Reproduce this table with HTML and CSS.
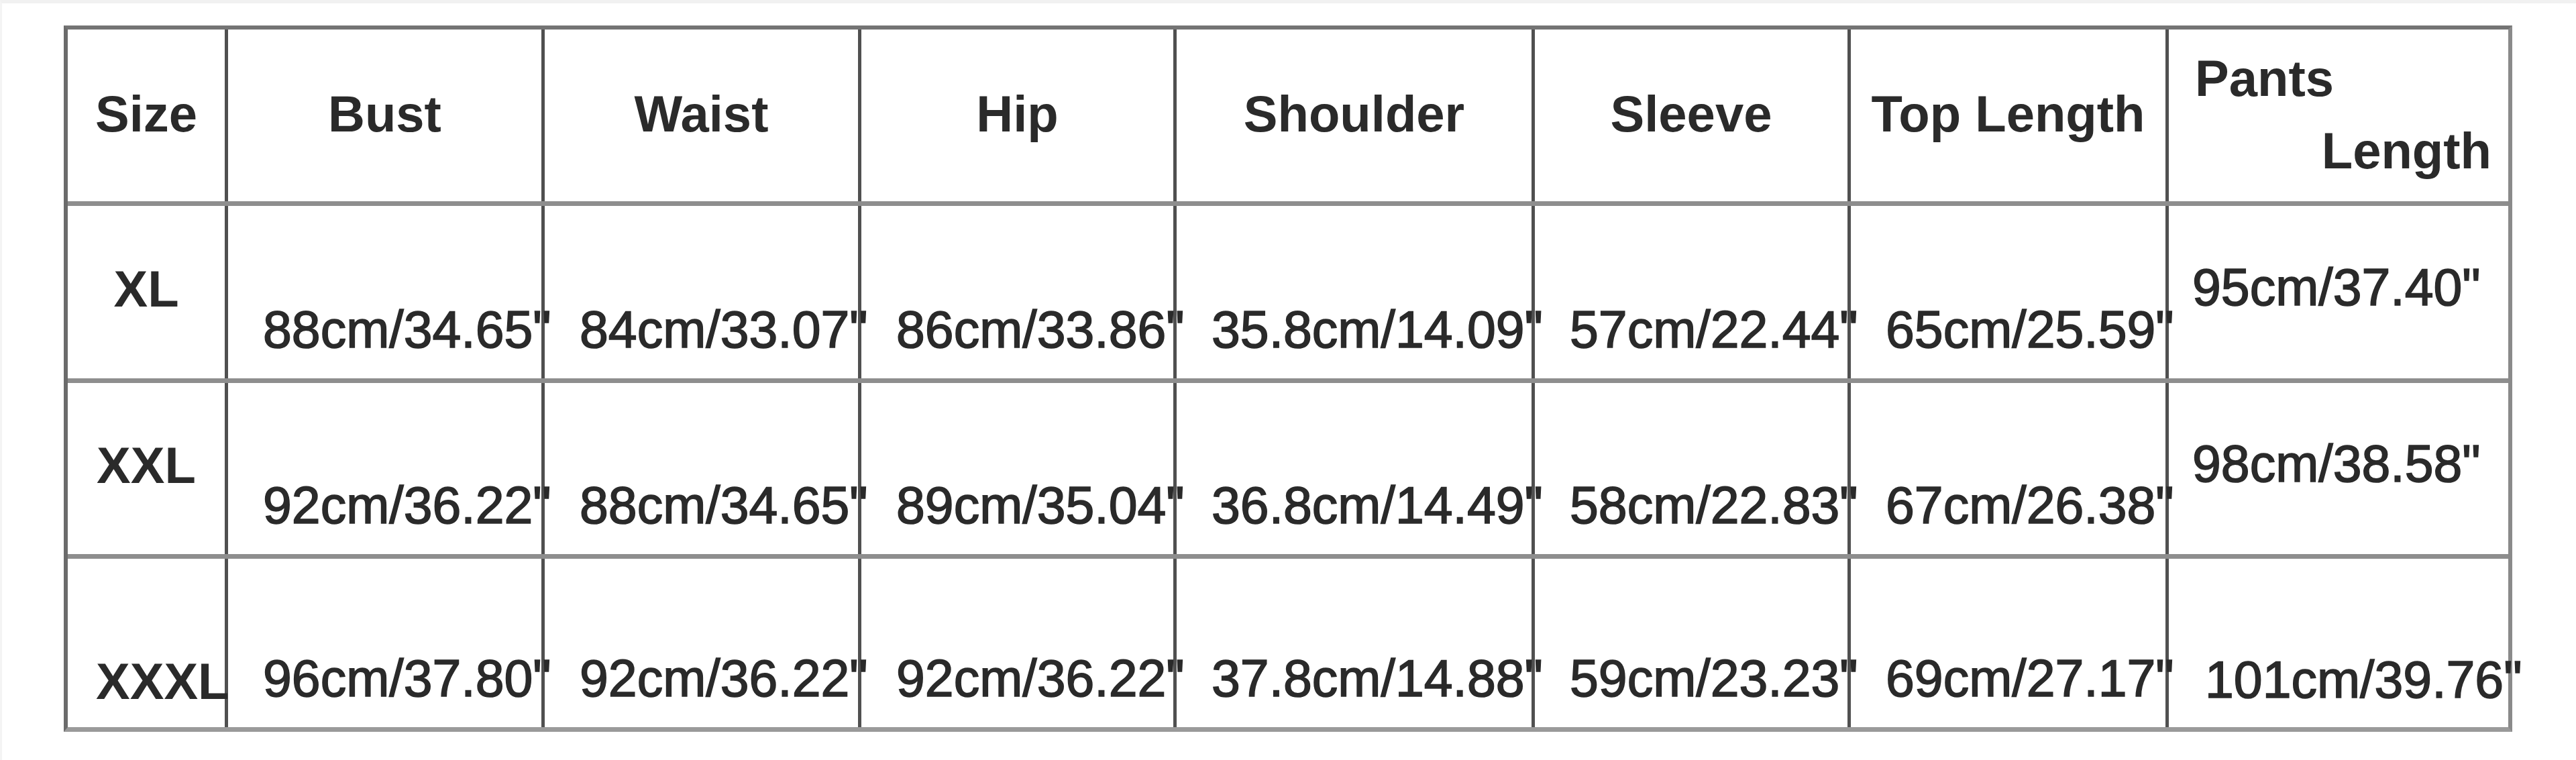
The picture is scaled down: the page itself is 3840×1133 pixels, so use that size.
FILE: index.html
```html
<!DOCTYPE html>
<html lang="en">
<head>
<meta charset="utf-8">
<title>Size Chart</title>
<link rel="stylesheet" href="styles.css">
</head>
<body>
<div class="page">
  <div class="chart">
    <div class="row head">
      <div class="cell h">Size</div>
      <div class="cell h">Bust</div>
      <div class="cell h">Waist</div>
      <div class="cell h">Hip</div>
      <div class="cell h">Shoulder</div>
      <div class="cell h">Sleeve</div>
      <div class="cell h">Top Length</div>
      <div class="cell h pants"><span class="l1">Pants</span><span class="l2">Length</span></div>
    </div>
    <div class="row r1">
      <div class="cell size mid">XL</div>
      <div class="cell d">88cm/34.65"</div>
      <div class="cell d">84cm/33.07"</div>
      <div class="cell d">86cm/33.86"</div>
      <div class="cell d">35.8cm/14.09"</div>
      <div class="cell d">57cm/22.44"</div>
      <div class="cell d">65cm/25.59"</div>
      <div class="cell d pl mid">95cm/37.40"</div>
    </div>
    <div class="row r2">
      <div class="cell size mid">XXL</div>
      <div class="cell d">92cm/36.22"</div>
      <div class="cell d">88cm/34.65"</div>
      <div class="cell d">89cm/35.04"</div>
      <div class="cell d">36.8cm/14.49"</div>
      <div class="cell d">58cm/22.83"</div>
      <div class="cell d">67cm/26.38"</div>
      <div class="cell d pl mid">98cm/38.58"</div>
    </div>
    <div class="row r3">
      <div class="cell size low">XXXL</div>
      <div class="cell d">96cm/37.80"</div>
      <div class="cell d">92cm/36.22"</div>
      <div class="cell d">92cm/36.22"</div>
      <div class="cell d">37.8cm/14.88"</div>
      <div class="cell d">59cm/23.23"</div>
      <div class="cell d">69cm/27.17"</div>
      <div class="cell d pl pl3">101cm/39.76"</div>
    </div>
  </div>
</div>
</body>
</html>
```
FILE: styles.css
```css
* { box-sizing: border-box; }

html, body {
  margin: 0;
  padding: 0;
  background: #ffffff;
}

.page {
  width: 3840px;
  height: 1133px;
  padding: 33px 0 0 92px;
  border-top: 5px solid #f1f1f1;
  border-left: 3px solid #f4f4f4;
  font-family: "Liberation Sans", Arial, sans-serif;
  color: #2a2a2a;
}

.chart {
  width: 3650px;
  border-left: 6px solid #6b6b6b;
  border-top: 6px solid #747474;
  border-right: 6px solid #8a8a8a;
  border-bottom: 7px solid #9a9a9a;
  filter: blur(0.6px);
}

.row {
  display: grid;
  grid-template-columns: 239px 472px 472px 470px 534px 471px 474px 506px;
  border-bottom: 7px solid #8e8e8e;
}

.row.head { height: 263px; }
.row.r1 { height: 264px; }
.row.r2 { height: 262px; }
.row.r3 { height: 251px; border-bottom: none; }

.cell {
  display: flex;
  border-right: 5px solid #505050;
  white-space: nowrap;
  line-height: 1;
  min-width: 0;
}

.cell:last-child { border-right: none; }

.cell.h {
  font-size: 76px;
  font-weight: bold;
  justify-content: center;
  align-items: center;
  padding-bottom: 4px;
}

.cell.pants {
  flex-direction: column;
  justify-content: flex-start;
  align-items: stretch;
  padding: 19px 25px 0 39px;
  line-height: 108px;
}

.pants .l1 { text-align: left; }
.pants .l2 { text-align: right; }

.cell.size {
  font-size: 76px;
  font-weight: bold;
}

.cell.size.mid {
  justify-content: center;
  align-items: center;
  padding-bottom: 10px;
}

.cell.size.low {
  justify-content: flex-start;
  align-items: flex-end;
  padding: 0 0 30px 42px;
}

.cell.d {
  font-size: 77px;
  font-weight: normal;
  -webkit-text-stroke: 1.6px #2a2a2a;
  align-items: flex-end;
  padding: 0 0 34px 52px;
}

.cell.d.pl {
  padding-left: 35px;
}

.cell.d.mid {
  align-items: center;
  padding-bottom: 14px;
}

.cell.d.pl3 {
  padding-left: 54px;
  padding-bottom: 32px;
}
```
